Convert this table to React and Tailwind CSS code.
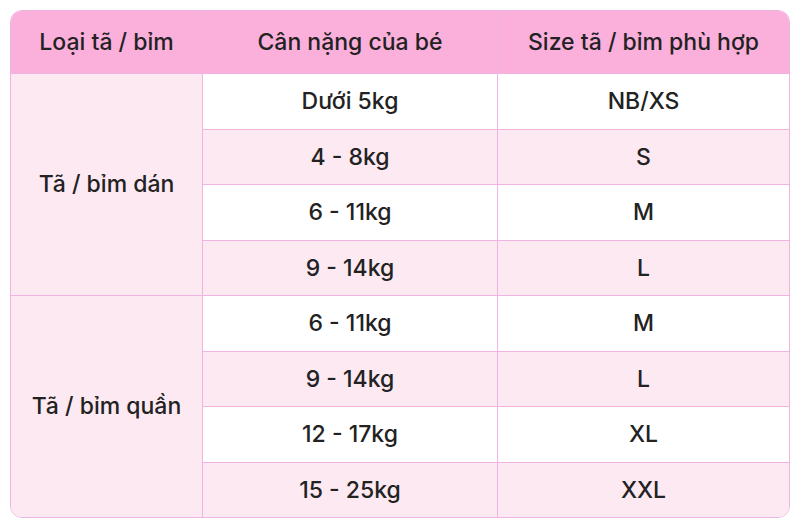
const groups = [
  {
    name: "Tã / bỉm dán",
    rows: [
      ["Dưới 5kg", "NB/XS"],
      ["4 - 8kg", "S"],
      ["6 - 11kg", "M"],
      ["9 - 14kg", "L"],
    ],
  },
  {
    name: "Tã / bỉm quần",
    rows: [
      ["6 - 11kg", "M"],
      ["9 - 14kg", "L"],
      ["12 - 17kg", "XL"],
      ["15 - 25kg", "XXL"],
    ],
  },
]

export default function App() {
  return (
    <div className="h-[528px] w-[800px] bg-white p-[10px] text-[23px] font-medium text-[#222] [font-family:Inter,'Liberation_Sans',sans-serif]">
      <div className="grid grid-cols-[192px_295px_1fr] overflow-hidden rounded-xl border border-[#efb5e0]">
        <div className="flex h-[62px] items-center justify-center border-r border-[#efb5e0] bg-[#fbb0dc]">Loại tã / bỉm</div>
        <div className="flex h-[62px] items-center justify-center border-r border-[#efb5e0] bg-[#fbb0dc]">Cân nặng của bé</div>
        <div className="flex h-[62px] items-center justify-center bg-[#fbb0dc]">Size tã / bỉm phù hợp</div>
        {groups.map((g) => (
          <div key={g.name} className="col-span-3 grid grid-cols-subgrid border-t border-[#efb5e0]">
            <div className="row-span-4 flex items-center justify-center border-r border-[#efb5e0] bg-[#fde9f2]">{g.name}</div>
            {g.rows.map(([w, s], i) => (
              <div
                key={i}
                className={`col-span-2 grid grid-cols-subgrid ${i > 0 ? "border-t border-[#efb5e0]" : ""} ${i % 2 ? "bg-[#fde9f2]" : "bg-white"}`}
              >
                <div className="flex h-[54.5px] items-center justify-center border-r border-[#efb5e0]">{w}</div>
                <div className="flex h-[54.5px] items-center justify-center">{s}</div>
              </div>
            ))}
          </div>
        ))}
      </div>
    </div>
  )
}
